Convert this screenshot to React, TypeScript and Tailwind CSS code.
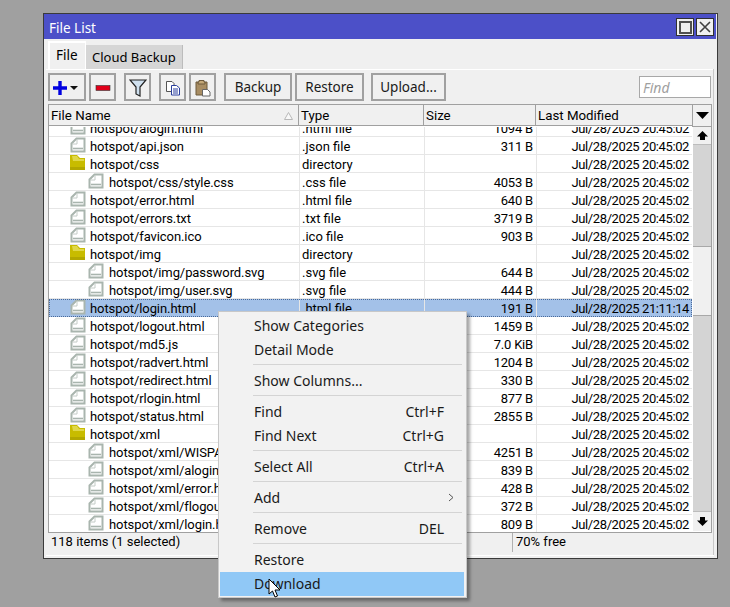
import React from "react";

type Row = { n: string; d: number; t: string; s: string; m: string; dir?: boolean; sel?: boolean };
const M = "Jul/28/2025 20:45:02";
const rows: Row[] = [
  { n: "hotspot/alogin.html", d: 0, t: ".html file", s: "1094 B", m: M },
  { n: "hotspot/api.json", d: 0, t: ".json file", s: "311 B", m: M },
  { n: "hotspot/css", d: 0, t: "directory", s: "", m: M, dir: true },
  { n: "hotspot/css/style.css", d: 1, t: ".css file", s: "4053 B", m: M },
  { n: "hotspot/error.html", d: 0, t: ".html file", s: "640 B", m: M },
  { n: "hotspot/errors.txt", d: 0, t: ".txt file", s: "3719 B", m: M },
  { n: "hotspot/favicon.ico", d: 0, t: ".ico file", s: "903 B", m: M },
  { n: "hotspot/img", d: 0, t: "directory", s: "", m: M, dir: true },
  { n: "hotspot/img/password.svg", d: 1, t: ".svg file", s: "644 B", m: M },
  { n: "hotspot/img/user.svg", d: 1, t: ".svg file", s: "444 B", m: M },
  { n: "hotspot/login.html", d: 0, t: ".html file", s: "191 B", m: "Jul/28/2025 21:11:14", sel: true },
  { n: "hotspot/logout.html", d: 0, t: "", s: "1459 B", m: M },
  { n: "hotspot/md5.js", d: 0, t: "", s: "7.0 KiB", m: M },
  { n: "hotspot/radvert.html", d: 0, t: "", s: "1204 B", m: M },
  { n: "hotspot/redirect.html", d: 0, t: "", s: "330 B", m: M },
  { n: "hotspot/rlogin.html", d: 0, t: "", s: "877 B", m: M },
  { n: "hotspot/status.html", d: 0, t: "", s: "2855 B", m: M },
  { n: "hotspot/xml", d: 0, t: "", s: "", m: M, dir: true },
  { n: "hotspot/xml/WISPA", d: 1, t: "", s: "4251 B", m: M },
  { n: "hotspot/xml/alogin", d: 1, t: "", s: "839 B", m: M },
  { n: "hotspot/xml/error.h", d: 1, t: "", s: "428 B", m: M },
  { n: "hotspot/xml/flogout", d: 1, t: "", s: "372 B", m: M },
  { n: "hotspot/xml/login.h", d: 1, t: "", s: "809 B", m: M },
];

const FileIcon = () => (
  <svg width="17" height="16" viewBox="0 0 17 16" className="block">
    <path d="M1.5 14.5V6.5L6.5 1.5H14.5V14.5Z" fill="#fff" stroke="#a9b5ae" strokeWidth="2" />
    <path d="M7 2V7H2" fill="none" stroke="#c4ccc7" strokeWidth="1" />
    <path d="M3 11.5H13" stroke="#a9b5ae" strokeWidth="1.6" />
  </svg>
);
const FolderIcon = () => (
  <svg width="16" height="16" viewBox="0 0 16 16" className="block">
    <path d="M0 0H7L10 3H15V15H0Z" fill="#c8bc00" />
    <path d="M2 1H7L9 4H14V6H3Z" fill="#e0d84a" />
    <path d="M0 12H15V15H0Z" fill="#b3a800" />
  </svg>
);

const btn = "absolute top-[73px] h-[28px] border-2 border-[#a0a0a0] bg-[#f0f0f0] flex items-center justify-center pt-[1px] text-[13.5px] text-[#1a1a1a]";

const MenuItem = ({ y, l, r }: { y: number; l: string; r?: string }) => (
  <div className="absolute left-[35px] right-[22px] h-[20px] flex items-center justify-between text-[14px] text-[#1a1a1a] leading-none" style={{ top: y }}>
    <span>{l}</span>
    {r ? <span>{r}</span> : null}
  </div>
);
const Sep = ({ y }: { y: number }) => <div className="absolute left-[34px] right-[4px] h-[1px] bg-[#d4d4d4]" style={{ top: y }} />;

export default function App() {
  return (
    <div className="relative w-[730px] h-[607px] overflow-hidden bg-[#a0a0a0] text-[13px] text-black [font-family:'Noto_Sans',sans-serif]">
      {/* window */}
      <div className="absolute left-[43px] top-[13px] w-[675px] h-[546px] bg-[#f0f0f0] border border-[#3a3a3a]" />
      <div className="absolute left-[44px] top-[14px] w-[672px] h-[25px] bg-[#4c50c8] text-white text-[13.5px] flex items-center pl-[5px] pt-[3px]">File List</div>
      <div className="absolute left-[676px] top-[18px] w-[18px] h-[18px] bg-[#f0f0f0] border border-[#303030] flex items-center justify-center">
        <div className="w-[13px] h-[13px] border-2 border-[#505050]" />
      </div>
      <div className="absolute left-[696px] top-[18px] w-[18px] h-[18px] bg-[#f0f0f0] border border-[#303030] flex items-center justify-center">
        <svg width="12" height="12" viewBox="0 0 12 12"><path d="M1 1L11 11M11 1L1 11" stroke="#404040" strokeWidth="1.6" /></svg>
      </div>

      {/* tabs */}
      <div className="absolute left-[48px] top-[41px] w-[38px] h-[28px] bg-[#f0f0f0] border-t-2 border-l-2 border-r border-white pl-[6px] pt-[2px] text-[13.5px]">File</div>
      <div className="absolute left-[86px] top-[45px] w-[97px] h-[24px] bg-[#d6d6d6] border-r border-[#bcbcbc] pl-[6px] pt-[1px] flex items-center text-[13px]">Cloud Backup</div>
      <div className="absolute left-[46px] top-[69px] w-[668px] h-[1px] bg-white" />
      <div className="absolute left-[713px] top-[69px] w-[1px] h-[486px] bg-[#c8c8c8]" />
      <div className="absolute left-[46px] top-[555px] w-[668px] h-[1px] bg-white" />

      {/* toolbar */}
      <div className={btn + " left-[48px] w-[38px]"}>
        <svg width="32" height="20" viewBox="0 0 32 20">
          <path d="M9 3V17M2 10H16" stroke="#0000e0" strokeWidth="3.4" />
          <path d="M19 8H27L23 12Z" fill="#111" />
        </svg>
      </div>
      <div className={btn + " left-[89px] w-[27px]"}>
        <svg width="16" height="6" viewBox="0 0 16 6"><rect x="1" y="0.5" width="14" height="5" fill="#e0001a" stroke="#333" strokeWidth="0.6" /></svg>
      </div>
      <div className={btn + " left-[124px] w-[27px]"}>
        <svg width="18" height="19" viewBox="0 0 18 19"><path d="M1 2H17L11 9V18L7 16V9Z" fill="#cfe0ef" stroke="#222" strokeWidth="1.2" /></svg>
      </div>
      <div className={btn + " left-[159px] w-[27px]"}>
        <svg width="16" height="16" viewBox="0 0 16 16">
          <path d="M1.5 1.5H7L9 3.5V11.5H1.5Z" fill="#fff" stroke="#555" />
          <path d="M6.5 5.5H11.5L14.5 8V15H6.5Z" fill="#fff" stroke="#2a3f9e" />
          <path d="M8 9H13M8 11H13M8 13H13" stroke="#2a3f9e" />
        </svg>
      </div>
      <div className={btn + " left-[189px] w-[27px]"}>
        <svg width="16" height="18" viewBox="0 0 16 18">
          <path d="M1 3H12V16H1Z" fill="#a88d63" stroke="#6d5a3c" />
          <path d="M4 3V1.5H9V3H10V5H3V3Z" fill="#c4a878" stroke="#6d5a3c" />
          <path d="M7.5 10.5H12.5L15 13V17H7.5Z" fill="#fff" stroke="#666" />
        </svg>
      </div>
      <div className={btn + " left-[224px] w-[68px]"}>Backup</div>
      <div className={btn + " left-[295px] w-[69px]"}>Restore</div>
      <div className={btn + " left-[371px] w-[75px]"}>Upload...</div>
      <div className="absolute left-[639px] top-[76px] w-[72px] h-[22px] bg-white border border-[#a8a8a8] pl-[3px] flex items-center italic text-[#a0a0a0] text-[14px]">Find</div>

      {/* list frame */}
      <div className="absolute left-[48px] top-[104px] w-[664px] h-[429px] bg-white border border-[#a0a0a0]" />
      {/* header */}
      <div className="absolute left-[49px] top-[105px] w-[643px] h-[21px] bg-[#f0f0f0] border-b border-[#a0a0a0] text-[13.3px] [font-family:Roboto,sans-serif]">
        <div className="absolute left-0 top-0 w-[250px] h-[20px] pl-[2px] pt-[1px] flex items-center border-r border-[#a0a0a0]">File Name</div>
        <svg className="absolute left-[235px] top-[7px]" width="9" height="8" viewBox="0 0 9 8"><path d="M4.5 0.5L8.5 7.5H0.5Z" fill="#f8f8f8" stroke="#b8b8b8" /></svg>
        <div className="absolute left-[250px] top-0 w-[125px] h-[20px] pl-[2px] pt-[1px] flex items-center border-r border-[#a0a0a0]">Type</div>
        <div className="absolute left-[375px] top-0 w-[112px] h-[20px] pl-[2px] pt-[1px] flex items-center border-r border-[#a0a0a0]">Size</div>
        <div className="absolute left-[487px] top-0 w-[156px] h-[20px] pl-[2px] pt-[1px] flex items-center">Last Modified</div>
      </div>
      {/* rows */}
      <div className="absolute left-[49px] top-[127px] w-[643px] h-[405px] overflow-hidden text-[13px] [font-family:Roboto,sans-serif]">
        {rows.map((r, i) => (
          <div key={r.n} className={"absolute left-0 w-[643px] h-[18px] border-b " + (r.sel ? "bg-[#a3c1e8] border-[#a3c1e8]" : "border-[#e6e6e6]")} style={{ top: i * 18 - 8 }}>
            <div className="absolute top-[0px]" style={{ left: r.d ? 39 : 21 }}>{r.dir ? <FolderIcon /> : <FileIcon />}</div>
            <div className="absolute top-0 h-[18px] leading-[20px] tracking-[-0.08px] whitespace-nowrap" style={{ left: r.d ? 60 : 41 }}>{r.n}</div>
            <div className="absolute left-[250px] top-0 w-[125px] h-[18px] leading-[20px] pl-[2px] border-l border-[#e6e6e6]">{r.t}</div>
            <div className="absolute left-[375px] top-0 w-[112px] h-[18px] leading-[20px] pr-[3px] text-right tracking-[-0.2px] border-l border-[#e6e6e6]">{r.s}</div>
            <div className="absolute left-[487px] top-0 w-[156px] h-[18px] leading-[20px] pr-[3px] text-right tracking-[-0.4px] border-l border-[#e6e6e6]">{r.m}</div>
          </div>
        ))}
      </div>
      {/* selected dotted outline */}
      <div className="absolute left-[49px] top-[299px] w-[643px] h-[18px] border border-dotted border-[#4a6a9a]" />
      {/* scrollbar */}
      <div className="absolute left-[692px] top-[105px] w-[19px] h-[22px] bg-[#f0f0f0] border-l border-b border-[#a0a0a0] flex items-center justify-center">
        <svg width="13" height="7" viewBox="0 0 13 7"><path d="M0 0H13L6.5 7Z" fill="#000" /></svg>
      </div>
      <div className="absolute left-[693px] top-[127px] w-[18px] h-[404px] bg-[#d4d4d4]" />
      <div className="absolute left-[693px] top-[246px] w-[18px] h-[70px] bg-[#f0f0f0] border-y border-[#a8a8a8]" />
      <div className="absolute left-[693px] top-[127px] w-[18px] h-[18px] bg-[#f0f0f0] border-b border-[#bcbcbc] flex items-center justify-center">
        <svg width="11" height="9" viewBox="0 0 11 9"><path d="M5.5 0L11 5.5H8V9H3V5.5H0Z" fill="#000" /></svg>
      </div>
      <div className="absolute left-[693px] top-[511px] w-[18px] h-[20px] bg-[#f0f0f0] border-t border-[#bcbcbc] flex items-center justify-center">
        <svg width="11" height="9" viewBox="0 0 11 9"><path d="M5.5 9L11 3.5H8V0H3V3.5H0Z" fill="#000" /></svg>
      </div>
      {/* status */}
      <div className="absolute left-[51px] top-[532px] h-[20px] leading-[20px] [font-family:Roboto,sans-serif]">118 items (1 selected)</div>
      <div className="absolute left-[512px] top-[533px] w-[1px] h-[19px] bg-[#b0b0b0]" />
      <div className="absolute left-[516px] top-[532px] h-[20px] leading-[20px] [font-family:Roboto,sans-serif]">70% free</div>

      {/* context menu */}
      <div className="absolute left-[218px] top-[311px] w-[249px] h-[287px] bg-[#f2f2f2] border border-[#c8c8c8] shadow-[3px_3px_3px_rgba(0,0,0,0.35)]">
        <MenuItem y={4} l="Show Categories" />
        <MenuItem y={28} l="Detail Mode" />
        <Sep y={52} />
        <MenuItem y={59} l="Show Columns..." />
        <Sep y={83} />
        <MenuItem y={90} l="Find" r="Ctrl+F" />
        <MenuItem y={114} l="Find Next" r="Ctrl+G" />
        <Sep y={138} />
        <MenuItem y={145} l="Select All" r="Ctrl+A" />
        <Sep y={169} />
        <MenuItem y={176} l="Add" />
        <svg className="absolute left-[229px] top-[181px]" width="6" height="9" viewBox="0 0 6 9"><path d="M1 1L5 4.5L1 8" fill="none" stroke="#555" /></svg>
        <Sep y={200} />
        <MenuItem y={207} l="Remove" r="DEL" />
        <Sep y={231} />
        <MenuItem y={238} l="Restore" />
        <div className="absolute left-[1px] top-[260px] w-[244px] h-[24px] bg-[#90c8f6]" />
        <MenuItem y={262} l="Download" />
      </div>
      {/* cursor */}
      <svg className="absolute left-[268px] top-[578px]" width="14" height="21" viewBox="0 0 14 21">
        <path d="M1 1V16L4.5 13L7 19L9.5 18L7 12H12Z" fill="#fff" stroke="#000" strokeWidth="1" />
      </svg>
    </div>
  );
}
